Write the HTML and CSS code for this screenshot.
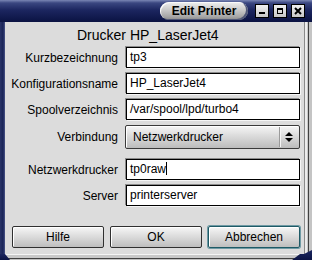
FILE: index.html
```html
<!DOCTYPE html>
<html>
<head>
<meta charset="utf-8">
<link rel="stylesheet" href="styles.css">
</head>
<body>
<div class="win">
  <div class="titlebar">
    <div class="title">Edit Printer</div>
    <div class="tb-btns">
      <span class="tb-btn"><svg width="12" height="12" viewBox="0 0 12 12"><rect x="3" y="7" width="6" height="2" fill="#000"/></svg></span>
      <span class="tb-btn"><svg width="12" height="12" viewBox="0 0 12 12"><rect x="3.5" y="3.5" width="5" height="5" fill="none" stroke="#000" stroke-width="1"/><rect x="3" y="3" width="6" height="2" fill="#000"/></svg></span>
      <span class="tb-btn"><svg width="12" height="12" viewBox="0 0 12 12"><path d="M3 3 L9 9 M9 3 L3 9" stroke="#000" stroke-width="2"/></svg></span>
    </div>
  </div>
  <div class="body">
    <div class="lborder"></div>
    <div class="content">
      <div class="heading">Drucker HP_LaserJet4</div>
      <div class="form">
        <div class="label">Kurzbezeichnung</div><div class="entry">tp3</div>
        <div class="label">Konfigurationsname</div><div class="entry">HP_LaserJet4</div>
        <div class="label">Spoolverzeichnis</div><div class="entry">/var/spool/lpd/turbo4</div>
        <div class="label">Verbindung</div>
        <div class="combo"><span class="combo-text">Netzwerkdrucker</span><span class="combo-arrow"><svg width="10" height="12" viewBox="0 0 10 12"><path d="M1 5 L5 1 L9 5 Z M1 7 L9 7 L5 11 Z" fill="#000"/></svg></span></div>
        <div class="label gap-top">Netzwerkdrucker</div><div class="entry gap-top">tp0raw<span class="caret"></span></div>
        <div class="label">Server</div><div class="entry">printerserver</div>
      </div>
      <div class="buttons">
        <div class="btn">Hilfe</div>
        <div class="btn">OK</div>
        <div class="btn default">Abbrechen</div>
      </div>
    </div>
    <div class="rborder"></div>
  </div>
  <div class="bborder"><span class="corner-l"></span><span class="corner-r"></span></div>
</div>
</body>
</html>
```
FILE: styles.css
```css
* { box-sizing: border-box; }
html, body { margin: 0; padding: 0; }
body {
  width: 312px;
  height: 260px;
  overflow: hidden;
  font-family: "Liberation Sans", Arial, sans-serif;
  font-size: 12px;
  color: #000;
  background: #d8d8d8;
}
.win {
  width: 312px;
  height: 260px;
  display: flex;
  flex-direction: column;
}
.titlebar {
  height: 22px;
  flex: none;
  background: linear-gradient(#7a86b4 0px, #3a4680 3px, #1c2660 10px, #0c1444 21px);
  display: flex;
  align-items: flex-start;
  padding-top: 2px;
  padding-left: 160px;
}
.title {
  width: 88px;
  height: 18px;
  border-radius: 9px;
  background: linear-gradient(#f0f0f0, #c8c8c8 45%, #a8a8a8 80%, #8a8a8a);
  box-shadow: inset -2px -1px 0 #505878, inset 1px 1px 0 #fafafa;
  font-weight: bold;
  font-size: 12px;
  line-height: 18px;
  text-align: center;
  color: #000;
}
.tb-btns {
  display: flex;
  gap: 4px;
  margin-left: 7px;
  margin-top: 2px;
}
.tb-btn {
  width: 14px;
  height: 14px;
  background: linear-gradient(#f0f0f0, #c8c8c8);
  border: 1px solid #000;
  display: flex;
  align-items: center;
  justify-content: center;
}
.tb-btn svg { display: block; }
.body {
  flex: 1;
  display: flex;
}
.lborder {
  width: 5px;
  flex: none;
  background: linear-gradient(90deg, #2a3468, #1a2458 60%, #4a5488);
}
.content {
  flex: 1;
  background: #dcdcdc;
  display: flex;
  flex-direction: column;
}
.rborder {
  width: 8px;
  flex: none;
  background: linear-gradient(90deg, #8a8a8a 0 1px, #ececec 1px 3px, #c8c8c8 3px 4px, #404040 4px 5px, #c4c4c4 5px);
}
.heading {
  margin-top: 5px;
  height: 16px;
  line-height: 16px;
  font-size: 14px;
  padding-left: 72px;
}
.form {
  margin-top: 4px;
  display: grid;
  grid-template-columns: 113px 174px;
  column-gap: 8px;
  row-gap: 5px;
  align-items: center;
}
.label {
  text-align: right;
  line-height: 14px;
}
.entry {
  height: 21px;
  background: #fff;
  border: 1px solid #000;
  box-shadow: -1px -1px 0 0 #8c8c8c, 1px 1px 0 0 #f6f6f6;
  padding-left: 3px;
  line-height: 19px;
  white-space: nowrap;
}
.caret {
  display: inline-block;
  width: 1px;
  height: 13px;
  background: #000;
  vertical-align: -2px;
}
.gap-top { margin-top: 5px; }
.combo {
  margin-left: -1px;
  width: 175px;
  height: 24px;
  border: 1px solid #3a3a3a;
  border-radius: 2px;
  background: linear-gradient(#f6f6f6, #d8d8d8 50%, #bcbcbc);
  box-shadow: inset 1px 1px 0 #ffffff;
  display: flex;
  align-items: center;
}
.combo-text {
  flex: 1;
  padding-left: 7px;
}
.combo-arrow {
  width: 19px;
  height: 20px;
  border-left: 1px solid #9a9a9a;
  box-shadow: inset 1px 0 0 #f4f4f4;
  display: flex;
  align-items: center;
  justify-content: center;
  margin-right: 1px;
}
.buttons {
  margin-top: auto;
  margin-bottom: 6px;
  padding-left: 7px;
  display: flex;
  gap: 6px;
}
.btn {
  width: 92px;
  height: 22px;
  border: 1px solid #303030;
  border-radius: 2px;
  background: linear-gradient(#f6f6f6, #dadada 50%, #bebebe);
  box-shadow: inset 1px 1px 0 #fff;
  text-align: center;
  line-height: 20px;
}
.btn.default {
  border-color: #1e5a66;
  box-shadow: 0 0 0 1px #6f9aa4, inset 1px 1px 0 #fff;
}
.bborder {
  height: 6px;
  flex: none;
  position: relative;
  background: linear-gradient(#f4f4f4 0 1px, #c8c8c8 1px 4px, #404040 4px 5px, #c0c0c0 5px);
}
.corner-l {
  position: absolute;
  left: 0;
  bottom: 0;
  width: 24px;
  height: 6px;
  background: linear-gradient(#1c2660, #0c1444);
  clip-path: polygon(0 0, 5px 0, 10px 100%, 0 100%);
}
.corner-r {
  position: absolute;
  right: 0;
  bottom: 0;
  width: 20px;
  height: 10px;
  background: linear-gradient(#1c2660, #0c1444);
  clip-path: polygon(100% 0, 100% 100%, 0 100%, 8px 40%, 12px 40%);
}
```
